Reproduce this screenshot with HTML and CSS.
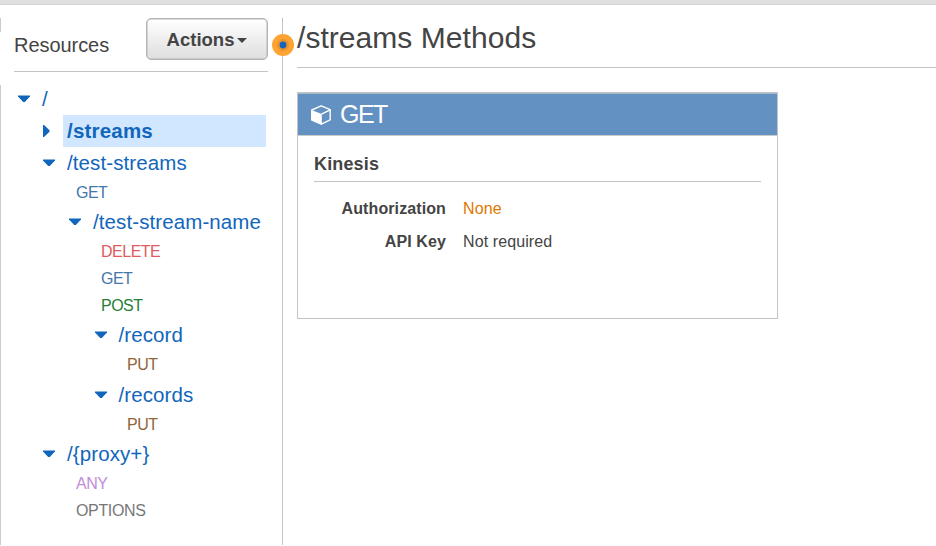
FILE: index.html
```html
<!DOCTYPE html>
<html lang="en">
<head>
<meta charset="utf-8">
<title>API Resources</title>
<link rel="stylesheet" href="styles.css">
</head>
<body>
<div class="topbar"></div>
<div class="layout">
  <aside class="sidebar">
    <header class="side-head">
      <h2>Resources</h2>
      <button class="actions" type="button"><span>Actions</span><svg width="10" height="5" viewBox="0 0 10 5"><path d="M0 0h10L5 5z" fill="#444"/></svg></button>
    </header>
    <nav class="tree">
      <div class="node"><svg class="arrow" viewBox="0 0 12 12"><path d="M0 2.5h12v1L6.8 9H5.2L0 3.5z"/></svg><span class="path">/</span></div>
      <div class="node d1 selected"><svg class="arrow" viewBox="0 0 12 12"><path d="M0 0h1l5.5 5.2v1.6L1 12H0z"/></svg><span class="path">/streams</span></div>
      <div class="node d1"><svg class="arrow" viewBox="0 0 12 12"><path d="M0 2.5h12v1L6.8 9H5.2L0 3.5z"/></svg><span class="path">/test-streams</span></div>
      <div class="method m1 get">GET</div>
      <div class="node d2"><svg class="arrow" viewBox="0 0 12 12"><path d="M0 2.5h12v1L6.8 9H5.2L0 3.5z"/></svg><span class="path">/test-stream-name</span></div>
      <div class="method m2 delete">DELETE</div>
      <div class="method m2 get">GET</div>
      <div class="method m2 post">POST</div>
      <div class="node d3"><svg class="arrow" viewBox="0 0 12 12"><path d="M0 2.5h12v1L6.8 9H5.2L0 3.5z"/></svg><span class="path">/record</span></div>
      <div class="method m3 put">PUT</div>
      <div class="node d3"><svg class="arrow" viewBox="0 0 12 12"><path d="M0 2.5h12v1L6.8 9H5.2L0 3.5z"/></svg><span class="path">/records</span></div>
      <div class="method m3 put">PUT</div>
      <div class="node d1"><svg class="arrow" viewBox="0 0 12 12"><path d="M0 2.5h12v1L6.8 9H5.2L0 3.5z"/></svg><span class="path">/{proxy+}</span></div>
      <div class="method m1 any">ANY</div>
      <div class="method m1 options">OPTIONS</div>
    </nav>
    <svg class="handle" width="22" height="22" viewBox="0 0 22 22"><circle cx="11" cy="11" r="11" fill="#ffa333"/><circle cx="11" cy="11" r="6" fill="#e8942e"/><circle cx="11" cy="11" r="3.4" fill="#1166bb"/></svg>
  </aside>
  <main class="content">
    <h1>/streams Methods</h1>
    <section class="card">
      <header class="card-head">
        <svg width="20" height="20" viewBox="0 0 20 20"><path d="M.8 5 10.2.8 19.2 4.6V14.8L10.2 19.2.8 15z" fill="none" stroke="#fff" stroke-width="1.4" stroke-linejoin="round"/><path d="M.3 5 10.8 9V19.6L.3 15z" fill="#fff"/><path d="M10.5 9.1 19.2 4.8" stroke="#fff" stroke-width="1.4"/></svg>
        <span>GET</span>
      </header>
      <div class="card-body">
        <h3>Kinesis</h3>
        <dl>
          <dt>Authorization</dt><dd class="none">None</dd>
          <dt>API Key</dt><dd>Not required</dd>
        </dl>
      </div>
    </section>
  </main>
</div>
</body>
</html>
```
FILE: styles.css
```css
* { box-sizing: border-box; }
body { margin: 0; height: 546px; overflow: hidden; background: #fff; color: #444; font-family: "Liberation Sans", Arial, sans-serif; }
h1, h2, h3, dl, dd { margin: 0; }
.topbar { height: 5px; background: #dfdfdf; border-bottom: 1px solid #d4d4d4; }
.layout { display: flex; height: 540px; padding-top: 13px; }
.sidebar { position: relative; width: 283px; flex: none; border-right: 1px solid #c4c4c4; background: linear-gradient(#ccc, #ccc) 0 0 / 1px 14px no-repeat, linear-gradient(#ccc, #ccc) 0 67px / 1px 460px no-repeat; }
.side-head { display: flex; justify-content: space-between; height: 54px; margin: 0 14px; border-bottom: 1px solid #c4c4c4; }
.side-head h2 { font-size: 20px; font-weight: 400; line-height: 54px; letter-spacing: -.05px; }
.actions { display: flex; align-items: center; justify-content: center; gap: 3px; width: 122px; height: 42px; padding: 2px 0 0; border: 1px solid #b5b5b5; border-radius: 5px; background: linear-gradient(#fff, #dedede); box-shadow: inset 0 0 0 .5px #b5b5b5; color: #444; font: bold 18.5px "Liberation Sans", Arial, sans-serif; }
.actions svg { margin-top: 1px; }
.tree { padding-top: 10.5px; }
.node { display: flex; align-items: center; height: 32.2px; padding: 0 16px 0 18px; color: #1166bb; font-size: 20.5px; letter-spacing: .1px; }
.arrow { width: 12px; height: 12px; margin-right: 8px; fill: #1166bb; }
.path { flex: 1; padding-left: 4px; line-height: 32px; white-space: nowrap; }
.d1 { padding-left: 43px; }
.d2 { padding-left: 69px; }
.d3 { padding-left: 94.5px; }
.selected .path { background: #d1e7ff; font-weight: bold; letter-spacing: .2px; }
.method { height: 27px; font-size: 16px; line-height: 27px; letter-spacing: -.5px; }
.m1 { padding-left: 76px; }
.m2 { padding-left: 101px; }
.m3 { padding-left: 127px; }
.get { color: #4477aa; }
.delete { color: #e05b5f; }
.post { color: #258036; }
.put { color: #916538; }
.any { color: #c28bdb; }
.options { color: #777; letter-spacing: -.35px; }
.handle { position: absolute; left: 271.5px; top: 15.5px; }
.content { flex: 1; padding-left: 14px; }
h1 { height: 50px; border-bottom: 1px solid #c4c4c4; font-size: 30px; font-weight: 400; line-height: 40px; letter-spacing: .05px; }
.card { width: 481px; height: 227px; margin-top: 24px; border: 1px solid #c4c4c4; }
.card-head { display: flex; align-items: center; gap: 9px; height: 43px; padding-left: 13px; border-top: 1px solid #a7b8ca; border-bottom: 1px solid #ccc; background: #6391c1; color: #fff; font-size: 25px; letter-spacing: -1.5px; }
.card-body { padding: 12px 16px 0; }
h3 { height: 34px; border-bottom: 1px solid #c4c4c4; font-size: 18px; line-height: 32px; letter-spacing: .15px; }
dl { display: grid; grid-template-columns: 132px 1fr; column-gap: 17px; padding-top: 11px; font-size: 16px; line-height: 32.5px; letter-spacing: .1px; }
dt { font-weight: bold; text-align: right; }
.none { color: #e07700; }
```
